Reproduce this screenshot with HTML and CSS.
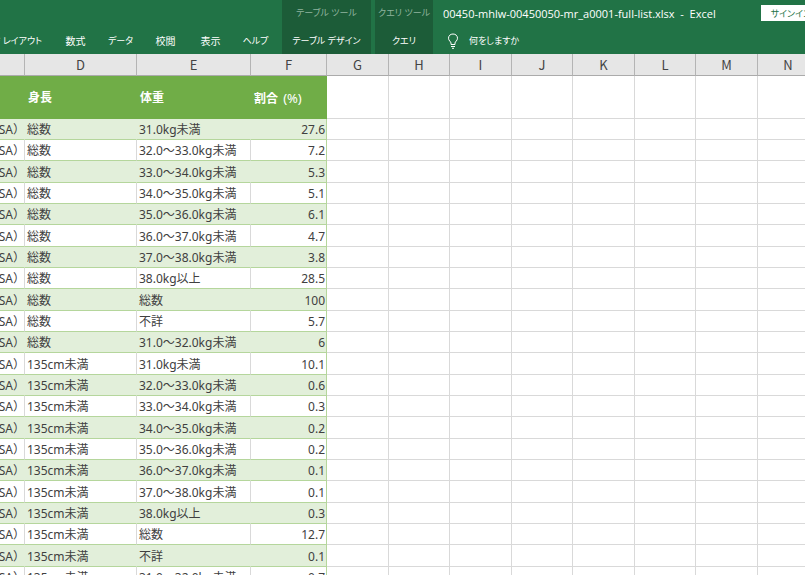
FILE: index.html
```html
<!DOCTYPE html>
<html lang="ja">
<head>
    <meta charset="UTF-8">
    <title>00450-mhlw-00450050-mr_a0001-full-list.xlsx - Excel</title>
    <link rel="stylesheet" href="styles.css">
</head>
<body>
    <header class="ribbon">
        <nav class="tabs">
            <button class="tab tab-first">ジ レイアウト</button>
            <button class="tab kanji">数式</button>
            <button class="tab">データ</button>
            <button class="tab kanji">校閲</button>
            <button class="tab kanji">表示</button>
            <button class="tab">ヘルプ</button>
        </nav>
        <div class="context context-table">
            <span class="context-title">テーブル ツール</span>
            <button class="context-tab">テーブル デザイン</button>
        </div>
        <div class="context context-query">
            <span class="context-title">クエリ ツール</span>
            <button class="context-tab">クエリ</button>
        </div>
        <div class="title-area">
            <div class="title-row">
                <span class="file-name">00450-mhlw-00450050-mr_a0001-full-list.xlsx&nbsp; -&nbsp; Excel</span>
                <button class="sign-in">サインイン</button>
            </div>
            <button class="tell-me">
                <svg class="bulb" viewBox="0 0 12 16" width="12" height="16" fill="none" stroke="#ffffff">
                    <path d="M4 11.500V10C4 8.600 1.500 7.800 1.500 5.200C1.500 2.700 3.400 1 6 1S10.500 2.700 10.500 5.200C10.500 7.800 8 8.600 8 10V11.500Z"/>
                    <path d="M4 13.500H8M5 15.300H7"/>
                </svg>
                <span>何をしますか</span>
            </button>
        </div>
    </header>

    <main class="sheet">
        <table class="grid">
            <colgroup>
                <col class="col-c"><col class="col-d"><col class="col-e"><col class="col-f">
                <col class="col-wide"><col class="col-plain"><col class="col-wide"><col class="col-plain">
                <col class="col-wide"><col class="col-plain"><col class="col-wide"><col class="col-plain">
            </colgroup>
            <thead>
                <tr class="letters">
                    <th></th><th>D</th><th>E</th><th>F</th><th>G</th><th>H</th>
                    <th>I</th><th>J</th><th>K</th><th>L</th><th>M</th><th>N</th>
                </tr>
                <tr class="names">
                    <th></th><th>身長</th><th>体重</th><th>割合 <span class="unit">(%)</span></th>
                    <td></td><td></td><td></td><td></td><td></td><td></td><td></td><td></td>
                </tr>
            </thead>
            <tbody id="rows">
                <!-- Rows are added by script.js -->
            </tbody>
        </table>
    </main>
    <script src="script.js"></script>
</body>
</html>
```

FILE: styles.css
```css
body {
    margin: 0;
    background: #ffffff;
    font-family: "Noto Sans", "Noto Sans CJK JP", sans-serif;
    font-size: 12px;
    overflow: hidden;
}

button {
    border: 0;
    padding: 0;
    background: none;
    color: #ffffff;
    font: inherit;
    white-space: nowrap;
}

/* Ribbon */

.ribbon {
    display: flex;
    height: 54px;
    overflow: hidden;
    background: #217346;
    color: #ffffff;
    font-family: "Open Sans", "Noto Sans CJK JP", sans-serif;
    font-size: 9px;
    font-feature-settings: "palt";
}

.tabs {
    display: flex;
    flex-shrink: 0;
    margin-right: 4px;
    padding-top: 28px;
}

.tab {
    width: 45px;
    height: 25px;
    text-align: center;
}

.tab-first {
    display: flex;
    justify-content: flex-end;
    align-items: center;
    width: 53px;
    padding-right: 11px;
}

.kanji {
    font-size: 10px;
}

.context {
    display: flex;
    flex-direction: column;
    flex-shrink: 0;
    align-items: center;
    margin-right: 4px;
    background: #1c5c38;
}

.context-table {
    width: 89px;
}

.context-query {
    width: 58px;
}

.context-title {
    height: 28px;
    line-height: 26px;
    color: #90b49f;
    white-space: nowrap;
}

.context-tab {
    height: 25px;
}

.title-area {
    flex-shrink: 0;
    padding-left: 6px;
}

.title-row {
    display: flex;
    align-items: center;
    height: 26px;
}

.file-name {
    margin-right: 45px;
    font-size: 11px;
    white-space: nowrap;
}

.sign-in {
    height: 16px;
    padding: 0 10px;
    background: #ffffff;
    color: #217346;
}

.tell-me {
    display: flex;
    align-items: center;
    height: 25px;
    gap: 10px;
    margin-top: 2px;
    padding-left: 4px;
}

/* Sheet */

.sheet {
    overflow: hidden;
}

.grid {
    table-layout: fixed;
    width: 0;
    border-collapse: separate;
    border-spacing: 0;
    color: #404040;
}

.col-c { width: 25px; }
.col-d { width: 112px; }
.col-e { width: 114px; }
.col-f { width: 76px; }
.col-wide { width: 62px; }
.col-plain { width: 61px; }

.grid th,
.grid td {
    box-sizing: border-box;
    padding: 2px 2px 0;
    overflow: hidden;
    border-right: 1px solid #d9d9d9;
    border-bottom: 1px solid #d9d9d9;
    line-height: 18px;
    white-space: nowrap;
}

.grid .letters th {
    height: 22px;
    padding-top: 0;
    background: #e6e6e6;
    border-right-color: #b4b4b4;
    border-bottom-color: #ababab;
    color: #444444;
    font-family: "Noto Sans CJK JP", sans-serif;
    font-size: 13px;
    font-weight: normal;
}

.grid .names th {
    height: 43px;
    padding-left: 3px;
    background: #70ad47;
    border-color: #70ad47;
    color: #ffffff;
    font-weight: bold;
    text-align: left;
}

.unit {
    padding-left: 2px;
    font-size: 13px;
    font-weight: normal;
}

#rows td {
    height: 21px;
}

#rows tr:nth-child(3n) td {
    height: 22px;
}

#rows .data {
    border-bottom-color: #b5d69c;
}

#rows .area {
    direction: rtl;
    padding-left: 0;
    padding-right: 0;
}

#rows .rate {
    padding-right: 1px;
    border-right-color: #b5d69c;
    text-align: right;
}

#rows tr:nth-child(odd) .data {
    background: #e2efda;
    border-right-color: #e2efda;
}

#rows tr:nth-child(odd) .rate {
    border-right-color: #b5d69c;
}
```

FILE: script.js
```javascript
var data = [
    ['総数', '31.0kg未満', '27.6'],
    ['総数', '32.0～33.0kg未満', '7.2'],
    ['総数', '33.0～34.0kg未満', '5.3'],
    ['総数', '34.0～35.0kg未満', '5.1'],
    ['総数', '35.0～36.0kg未満', '6.1'],
    ['総数', '36.0～37.0kg未満', '4.7'],
    ['総数', '37.0～38.0kg未満', '3.8'],
    ['総数', '38.0kg以上', '28.5'],
    ['総数', '総数', '100'],
    ['総数', '不詳', '5.7'],
    ['総数', '31.0～32.0kg未満', '6'],
    ['135cm未満', '31.0kg未満', '10.1'],
    ['135cm未満', '32.0～33.0kg未満', '0.6'],
    ['135cm未満', '33.0～34.0kg未満', '0.3'],
    ['135cm未満', '34.0～35.0kg未満', '0.2'],
    ['135cm未満', '35.0～36.0kg未満', '0.2'],
    ['135cm未満', '36.0～37.0kg未満', '0.1'],
    ['135cm未満', '37.0～38.0kg未満', '0.1'],
    ['135cm未満', '38.0kg以上', '0.3'],
    ['135cm未満', '総数', '12.7'],
    ['135cm未満', '不詳', '0.1'],
    ['135cm未満', '31.0～32.0kg未満', '0.7']
];
var emptyColumns = 8;
var body = document.getElementById('rows');

function addCell(row, text, className) {
    var cell = document.createElement('td');
    cell.className = className;
    if (className === 'data area') {
        // keep the end of the text in view
        var inner = document.createElement('bdi');
        inner.dir = 'ltr';
        inner.textContent = text;
        cell.appendChild(inner);
    } else {
        cell.textContent = text;
    }
    row.appendChild(cell);
}

data.forEach(function (item) {
    var row = document.createElement('tr');
    addCell(row, 'SA）', 'data area');
    addCell(row, item[0], 'data');
    addCell(row, item[1], 'data');
    addCell(row, item[2], 'data rate');
    for (var i = 0; i < emptyColumns; i++) {
        addCell(row, '', 'empty');
    }
    body.appendChild(row);
});
```
